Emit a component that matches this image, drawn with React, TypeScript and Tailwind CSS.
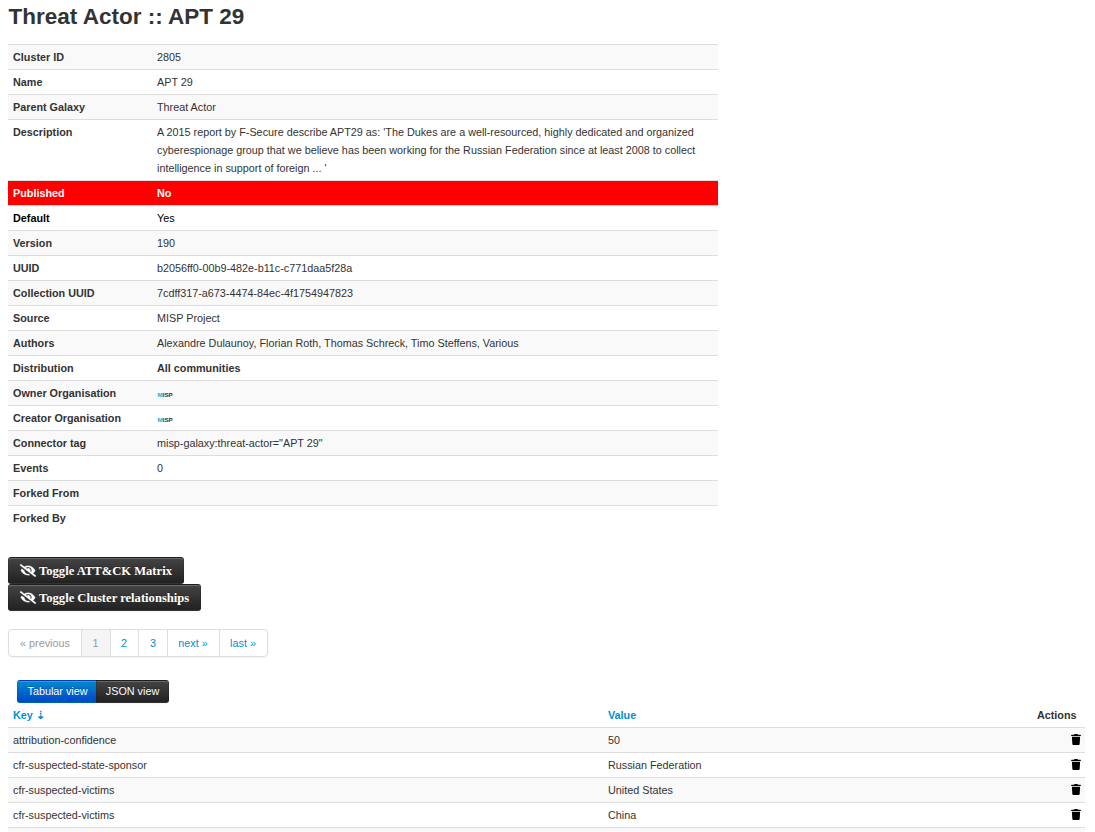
import { FaEyeSlash, FaTrash } from "react-icons/fa";

const Misp = () => (
  <span className="block h-[18px] pl-[0.5px] text-[6.2px] leading-[21px] font-bold text-[#333]">
    <span className="text-[#1ba3dc]">M</span>ISP
  </span>
);

const details = [
  { label: "Cluster ID", value: "2805" },
  { label: "Name", value: "APT 29" },
  { label: "Parent Galaxy", value: "Threat Actor" },
  {
    label: "Description",
    value:
      "A 2015 report by F-Secure describe APT29 as: 'The Dukes are a well-resourced, highly dedicated and organized cyberespionage group that we believe has been working for the Russian Federation since at least 2008 to collect intelligence in support of foreign ... '",
  },
  { label: "Published", value: "No", style: "bg-[#ff0000] text-white font-bold" },
  { label: "Default", value: "Yes", style: "bg-white text-black" },
  { label: "Version", value: "190" },
  { label: "UUID", value: "b2056ff0-00b9-482e-b11c-c771daa5f28a" },
  { label: "Collection UUID", value: "7cdff317-a673-4474-84ec-4f1754947823" },
  { label: "Source", value: "MISP Project" },
  { label: "Authors", value: "Alexandre Dulaunoy, Florian Roth, Thomas Schreck, Timo Steffens, Various" },
  { label: "Distribution", value: <b>All communities</b> },
  { label: "Owner Organisation", value: <Misp /> },
  { label: "Creator Organisation", value: <Misp /> },
  { label: "Connector tag", value: 'misp-galaxy:threat-actor="APT 29"' },
  { label: "Events", value: "0" },
  { label: "Forked From", value: "" },
  { label: "Forked By", value: "" },
];

const elements = [
  ["attribution-confidence", "50"],
  ["cfr-suspected-state-sponsor", "Russian Federation"],
  ["cfr-suspected-victims", "United States"],
  ["cfr-suspected-victims", "China"],
];

const button =
  "border border-black/10 border-b-black/25 text-white shadow-[inset_0_1px_0_rgba(255,255,255,0.2),0_1px_2px_rgba(0,0,0,0.05)] [text-shadow:0_-1px_0_rgba(0,0,0,0.25)]";
const inverse = "bg-linear-to-b from-[#444] to-[#222]";

const Toggle = ({ label, width }: { label: string; width: string }) => (
  <button
    className={`flex h-[27px] items-center rounded-[3px] pl-[11px] font-['Liberation_Serif',serif] text-[12.6px] font-bold whitespace-nowrap ${button} ${inverse} ${width}`}
  >
    <FaEyeSlash className="mr-[3px] h-[13px] w-[16px] shrink-0 overflow-visible stroke-white stroke-[8]" />
    {label}
  </button>
);

export default function App() {
  return (
    <main className="h-[832px] overflow-hidden bg-white px-2 font-['Liberation_Sans',Arial,sans-serif] text-[10.8px] leading-[18px] text-[#333]">
      <h2 className="h-[44px] pt-[1px] pl-[0.5px] text-[22.5px] leading-[32px] font-bold">Threat Actor :: APT 29</h2>

      <dl className="w-[710px]">
        {details.map((row, i) => (
          <div
            key={row.label}
            className={`flex min-h-[25px] border-t border-[#ddd] py-[3px] ${row.style ?? (i % 2 === 0 ? "bg-[#f9f9f9]" : "bg-white")}`}
          >
            <dt className="w-[144px] shrink-0 pl-[5px] font-bold">{row.label}</dt>
            <dd className="grow pr-[12px] pl-[5px]">{row.value}</dd>
          </div>
        ))}
      </dl>

      <div className="mt-[27px] flex flex-col items-start">
        <Toggle label="Toggle ATT&CK Matrix" width="w-[176px]" />
        <Toggle label="Toggle Cluster relationships" width="w-[193px]" />
      </div>

      <nav className="mt-[18px] flex h-[28px] w-[260px] rounded-[4px] border border-[#ddd] text-center leading-[26px] text-[#0090d0] shadow-[0_1px_2px_rgba(0,0,0,0.05)]">
        <span className="w-[72px] text-[#999]">« previous</span>
        <span className="w-[29px] border-l border-[#ddd] bg-[#f5f5f5] pr-px text-[#999]">1</span>
        <a className="w-[28px] border-l border-[#ddd] pr-px">2</a>
        <a className="w-[29px] border-l border-[#ddd]">3</a>
        <a className="w-[52px] border-l border-[#ddd] pr-px">next »</a>
        <a className="w-[48px] border-l border-[#ddd] pr-px">last »</a>
      </nav>

      <div className="mt-[23px] ml-[9px] flex h-[23px] leading-[21px]">
        <button className={`w-[79px] rounded-l-[3px] border-r-0 bg-linear-to-b from-[#0088cc] to-[#0044cc] pl-px ${button}`}>
          Tabular view
        </button>
        <button className={`w-[73px] rounded-r-[3px] ${button} ${inverse}`}>JSON view</button>
      </div>

      <table className="w-[1077px] table-fixed border-collapse text-left">
        <thead>
          <tr className="h-[24px]">
            <th className="w-[595px] pl-[5px] text-[#0090d0]">Key ⇣</th>
            <th className="pl-[5px] text-[#0090d0]">Value</th>
            <th className="w-[70px] pr-[8.5px] text-right">Actions</th>
          </tr>
        </thead>
        <tbody>
          {elements.map(([key, value], i) => (
            <tr key={i} className="h-[25px] border-t border-[#ddd] odd:bg-[#f9f9f9]">
              <td className="pl-[5px]">{key}</td>
              <td className="pl-[5px]">{value}</td>
              <td>
                <FaTrash className="mr-[4px] ml-auto h-[11px] w-[10px] text-black" />
              </td>
            </tr>
          ))}
          <tr className="h-[25px] border-t border-[#ddd] bg-[#f9f9f9]">
            <td colSpan={3} />
          </tr>
        </tbody>
      </table>
    </main>
  );
}
